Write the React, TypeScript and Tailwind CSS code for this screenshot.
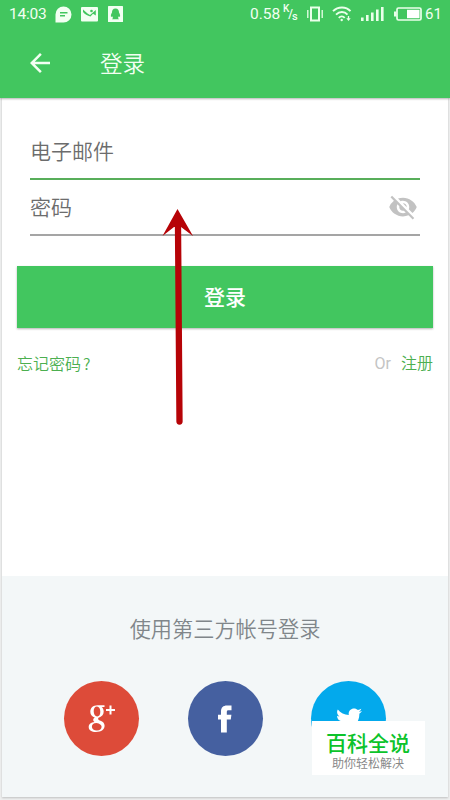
import { FaTwitter } from "react-icons/fa";
import { MdArrowBack, MdVisibilityOff } from "react-icons/md";

const StatusBar = () => {
  return (
    <div className="flex h-7 items-center justify-between pl-[9px] pr-[9px] text-[15.5px] leading-none">
      <div className="flex items-center">
        <span className="mt-px w-[46px] tracking-[-0.2px]">14:03</span>

        {/* message bubble */}
        <svg width="17" height="17" viewBox="0 0 17 17" className="shrink-0">
          <path d="M8.5 0.5a8 8 0 1 1 0 16H0.5V8.5a8 8 0 0 1 8-8z" fill="#f2fff2" />
          <path d="M5 6.7h7.5M5 9.8h5" stroke="#42c65f" strokeWidth="1.4" />
        </svg>

        {/* picture */}
        <svg width="17" height="15" viewBox="0 0 17 15" className="ml-[9px] shrink-0">
          <rect width="17" height="14.5" rx="1" fill="#f2fff2" />
          <path d="M2 2.5L6.500 6.500L9 8L14.800 3V8.500L12 6.800L9.500 9.500C6.500 9 3.500 7 2 5z" fill="#42c65f" />
          <circle cx="10.500" cy="4" r="1.300" fill="#42c65f" />
        </svg>

        {/* penguin */}
        <svg width="15" height="16" viewBox="0 0 15 16" className="ml-[10px] shrink-0">
          <rect width="15" height="16" rx="0.5" fill="#f2fff2" />
          <path
            d="M7.5 2.500C5 2.500 3.900 4.300 4 6.500C3 8.300 2.500 10 3.200 11L4.200 10.300L5 12L4 13.200H11L10 12L10.800 10.300L11.800 11C12.500 10 12 8.300 11 6.500C11.100 4.300 10 2.500 7.500 2.500z"
            fill="#42c65f"
          />
        </svg>
      </div>

      <div className="flex items-center">
        <span className="mt-px w-[33px]">0.58</span>
        <span className="flex w-[17px] text-[10px] font-medium">
          <span className="-mt-[3px]">K</span>
          <span className="-mx-px mt-px text-[12px]">/</span>
          <span className="mt-[4px] text-[11px]">s</span>
        </span>

        {/* vibrate */}
        <svg width="16" height="16" viewBox="0 0 16 16" className="ml-[7px] shrink-0" fill="none" stroke="#eaffea">
          <rect x="4" y="1.500" width="8" height="13" strokeWidth="2" />
          <path d="M0.800 4v8M15.200 4v8" strokeWidth="1.300" />
        </svg>

        {/* wifi */}
        <svg width="20" height="16" viewBox="0 0 20 16" className="ml-[9px] shrink-0" fill="none" stroke="#eaffea" strokeWidth="1.900">
          <path d="M1 5.200C6 0.200 14 0.200 18.500 5.200" />
          <path d="M4 8.600C7.500 5.200 12.500 5.200 15.500 8.600" />
          <path d="M6.800 11.800C8.500 9.900 11 9.900 12.700 11.800" />
          <circle cx="9.700" cy="14" r="1.200" fill="#eaffea" stroke="none" />
          <path d="M16.500 10v3" strokeWidth="1.300" />
          <path d="M14.300 12.300h4.400l-2.200 2.700z" fill="#eaffea" stroke="none" />
        </svg>

        {/* signal */}
        <svg width="23" height="15" viewBox="0 0 23 15" className="-mt-px ml-[9px] shrink-0" fill="#eaffea">
          <rect x="0" y="11.500" width="2.600" height="3.500" />
          <rect x="5" y="9" width="2.600" height="6" />
          <rect x="10" y="6.500" width="2.600" height="8.500" />
          <rect x="15" y="3.500" width="2.600" height="11.500" />
          <rect x="20" y="1" width="2.600" height="14" />
        </svg>

        {/* battery */}
        <svg width="28" height="14" viewBox="0 0 28 14" className="ml-[10px] shrink-0">
          <rect x="3" y="1" width="24" height="12" rx="1.500" fill="none" stroke="#eaffea" strokeWidth="1.700" />
          <rect x="0" y="4.500" width="2.500" height="5" fill="#eaffea" />
          <rect x="13" y="2.800" width="12.500" height="8.400" fill="#fff" />
        </svg>
        <span className="ml-[3px] mt-px w-[16px] text-[15px]">61</span>
      </div>
    </div>
  );
};

const App = () => {
  return (
    <div className="relative flex h-[800px] w-[450px] flex-col overflow-hidden bg-[#eeefef] font-['Roboto','Noto_Sans_CJK_SC',sans-serif]">
      <header className="z-10 h-[98px] shrink-0 bg-[#42c65f] text-[#f2fff2] shadow-[0_1px_2px_rgba(0,0,0,0.3)]">
        <StatusBar />
        <div className="flex h-[70px] items-center pl-[25px]">
          <MdArrowBack size={30} />
          <h1 className="mt-[3px] ml-[45px] text-[22.5px] font-[350]">登录</h1>
        </div>
      </header>

      <main className="mx-[2px] mb-[3px] flex flex-1 flex-col bg-white shadow-[0_1px_2px_rgba(0,0,0,0.2)]">
        <div className="mx-7 mt-[26px] flex h-[56px] items-center border-b-2 border-[#58ae5a] text-[21px] font-[350] text-[#6c6c6c]">
          <span className="mt-[3px]">电子邮件</span>
        </div>
        <div className="mx-7 flex h-[56px] items-center justify-between border-b-2 border-[#a5a5a5] text-[21px] font-[350] text-[#6c6c6c]">
          <span className="mt-[3px]">密码</span>
          <MdVisibilityOff size={30} className="mr-[2px] text-[#c2c2c2]" />
        </div>

        <button className="mx-[15px] mt-[30px] h-[62px] shrink-0 bg-[#42c65f] pt-[4px] text-[21px] font-medium text-white shadow-[0_1px_2px_rgba(0,0,0,0.3)]">
          登录
        </button>

        <div className="mx-[15px] mt-[24px] flex h-6 items-center text-[16px] text-[#4caf50]">
          <a className="font-[350]">忘记密码<span className="ml-[2px] font-['Noto_Sans_CJK_SC',sans-serif]">?</span></a>
          <span className="ml-auto text-[#c4c4c4]">Or</span>
          <a className="ml-[10px] font-[350]">注册</a>
        </div>

        <section className="mt-auto h-[221px] bg-[#f3f7f8]">
          <p className="pt-[39px] text-center text-[21.2px] font-[350] leading-[30px] text-[#80868a]">使用第三方帐号登录</p>
          <div className="mt-[36px] flex justify-between px-[62px]">
            <div className="flex size-[75px] items-center justify-center rounded-full bg-[#dd4b39] text-white">
              {/* looped g and plus */}
              <svg width="28" height="29" viewBox="0 0 28 29" fill="none" stroke="#fff">
                <path
                  d="M16.500 1.200H9.500C5 1.200 2.300 4 2.300 7.700C2.300 10.800 4.300 12.900 6.800 13.500C4.800 14.800 4.600 16.800 6.500 18C3 18.300 0.700 20.200 0.700 23C0.700 26.200 3.700 28 8 28C13.500 28 16.600 25.300 16.600 21.800C16.600 19 14.800 17.800 12.500 16.800C10.500 15.900 9.400 15.300 10.500 13.700C13.700 12.900 15.700 10.600 15.700 7.500C15.700 5.500 14.900 3.900 13.700 2.900H16.500zM9 2.500C11 2.500 12.300 4.600 12.300 7.800C12.300 10.700 11.200 12.400 9.200 12.400C7.100 12.400 5.700 10.300 5.700 7.200C5.700 4.300 6.900 2.500 9 2.500zM8.500 18.900C11.800 19.500 13.600 20.700 13.600 22.800C13.600 25 11.800 26.500 8.900 26.500C5.900 26.500 3.900 25 3.900 22.700C3.900 20.500 5.500 19 8.500 18.900z"
                  fill="#fff"
                  fillRule="evenodd"
                  stroke="none"
                />
                <path d="M22.500 1.500V10.500M18 6H27" strokeWidth="2" />
              </svg>
            </div>
            <div className="flex size-[75px] items-center justify-center rounded-full bg-[#4560a0] text-white">
              <svg width="14" height="28" viewBox="0 0 14 28" fill="#fff">
                <path d="M3 27.500V14.500H0V9.800H3V6.500C3 2.500 5.200 0.500 9 0.500H13.500V5.200H10.500C9.200 5.200 8.800 5.800 8.800 7V9.800H13.400L12.800 14.500H8.800V27.500z" />
              </svg>
            </div>
            <div className="flex size-[75px] items-center justify-center rounded-full bg-[#03a9ec] text-white">
              <FaTwitter size={26} />
            </div>
          </div>
        </section>
      </main>

      {/* pointer up to the password field */}
      <svg width="34" height="220" viewBox="0 0 34 220" className="absolute left-[161px] top-[207px] z-20">
        <path d="M17 19L18.500 214.500" stroke="#b60307" strokeWidth="6.300" strokeLinecap="round" />
        <path d="M16.500 2L32 29L20 20H13L1.500 29z" fill="#b60307" />
      </svg>

      <div className="absolute left-[312px] top-[721px] z-20 flex h-[54px] w-[113px] flex-col items-center bg-white font-['Noto_Sans_CJK_SC',sans-serif]">
        <span className="-ml-px mt-[9px] text-[21px] font-medium leading-[25px] text-[#0cc32b]">百科全说</span>
        <span className="-ml-px mt-px text-[12px] leading-[14px] text-[#888]">助你轻松解决</span>
      </div>
    </div>
  );
};

export default App;
